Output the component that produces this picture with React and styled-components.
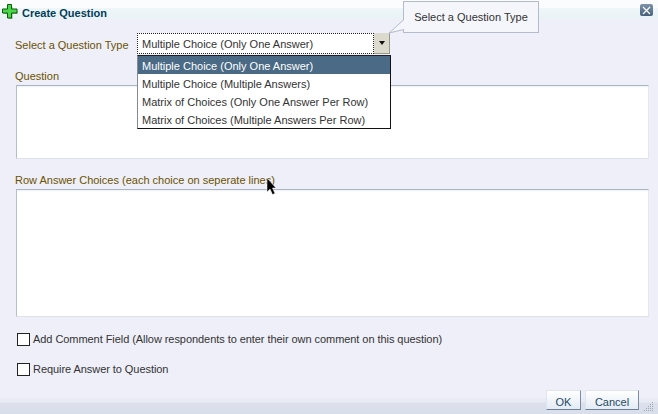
import React from "react";
import styled, { createGlobalStyle } from "styled-components";

const Global = createGlobalStyle`
  html, body { margin: 0; padding: 0; background: #eeeff8; }
  body { font-family: "Liberation Sans", Arial, sans-serif; font-size: 11px; overflow: hidden; }
`;
const Dialog = styled.div`
  position: relative; width: 658px; height: 414px; overflow: hidden;
  display: flex; flex-direction: column; background: #eeeff8;
`;
const TopGap = styled.div`height: 8px; background: #fbfcfd; flex: none;`;
const Header = styled.div`
  height: 11px; flex: none; display: flex; align-items: center; gap: 4px; padding-left: 2px;
  background: linear-gradient(#eef6f9, #e9f2f5);
`;
const Title = styled.span`font-weight: bold; font-size: 11px; color: #003d5b; line-height: 11px;`;
const PlusIcon = styled.svg`width: 16px; height: 16px; flex: none; margin-top: -4px; overflow: visible;`;
const CloseBtn = styled.div`
  position: absolute; left: 640px; top: 4px; width: 13px; height: 12px; border-radius: 2px;
  background: linear-gradient(#7f94ab, #46607c); display: flex; align-items: center; justify-content: center;
`;
const Body = styled.div`flex: 1; display: flex; flex-direction: column; padding: 14px 9px 0 15px; min-height: 0;`;
const TypeRow = styled.div`display: flex; align-items: center; height: 21px; gap: 7px; margin-bottom: 1px;`;
const Label = styled.label`color: #6b5200; font-size: 11px; line-height: 13px; display: block;`;
const TypeLabel = styled(Label)`width: 115px; flex: none; white-space: nowrap; padding-top: 3px;`;
const Select = styled.div`
  position: relative; width: 237px; height: 21px; box-sizing: border-box; background: #fff; display: flex;
  align-items: center; padding: 1px 0 0 4px; color: #333; border: 1px dotted #222;
`;
const Arrow = styled.div`
  position: absolute; left: 236px; top: -1px; width: 16px; height: 21px; background: #dbdacd;
  border-right: 1px solid #98988c; border-bottom: 1px solid #98988c; box-sizing: border-box;
  display: flex; align-items: center; justify-content: center;
  &::after { content: ""; border: 3px solid transparent; border-top: 4px solid #111; border-bottom: 0; }
`;
const Dropdown = styled.div`
  position: absolute; left: 137px; top: 55px; width: 254px; height: 74px; box-sizing: border-box;
  background: #fff; border: 1px solid #111; border-top-color: #222; border-left-color: #889; z-index: 2;
`;
const Option = styled.div`
  height: 18px; line-height: 20px; padding-left: 4px; font-size: 11px;
  color: ${p => (p.$active ? "#fff" : "#333")};
  background: ${p => (p.$active ? "#4a6a85" : "transparent")};
`;
const QLabel = styled(Label)`margin-top: 15px;`;
const RowLabel = styled(Label)`margin-top: 15px;`;
const TextBox = styled.div`
  margin: 2px 0 0 1px; height: ${p => p.$h}px; box-sizing: border-box; background: #fff;
  border-top: 1px solid #a9b5c0; border-left: 1px solid #b5bfc9;
  border-right: 1px solid #e3e6ee; border-bottom: 1px solid #dfe2ea;
  box-shadow: inset 0 2px 2px -1px #eef1f4;
`;
const CheckRow = styled.div`
  display: flex; align-items: center; gap: 3px; height: 14px; margin: ${p => p.$mt}px 0 0 2px;
  color: #333; letter-spacing: -0.06px;
`;
const Box = styled.span`width: 13px; height: 13px; box-sizing: border-box; border: 1px solid #222; background: #fff; flex: none;`;
const Footer = styled.div`
  height: 16px; flex: none; background: linear-gradient(#e8ebf4 0, #e8ebf4 4px, #dbe0ec 5px, #d8deea 100%); position: relative;
`;
const Buttons = styled.div`position: absolute; right: 19px; bottom: 4px; display: flex; gap: 4px;`;
const Button = styled.div`
  height: 20px; width: ${p => p.$w}px; box-sizing: border-box; display: flex; align-items: center; justify-content: center;
  padding-top: 3px;
  background: linear-gradient(#fff, #e3ebf5); color: #1d4a66; font-size: 11px;
  border: 1px solid #dfe4ee; border-right-color: #7d8ea0; border-bottom-color: #6d7f92;
`;
const Grip = styled.svg`position: absolute; right: 4px; bottom: 2px; width: 11px; height: 11px;`;
const Tip = styled.div`
  position: absolute; left: 403px; top: 1px; width: 136px; height: 32px; box-sizing: border-box;
  background: #f5f6fc; border: 1px solid #b3bcca; display: flex; align-items: center; justify-content: center;
  color: #333; z-index: 3;
`;
const TipTail = styled.svg`position: absolute; left: 388px; top: 17px; width: 17px; height: 17px; z-index: 4;`;
const Cursor = styled.svg`position: absolute; left: 266px; top: 178px; width: 11px; height: 17px; z-index: 5;`;

const options = [
  "Multiple Choice (Only One Answer)",
  "Multiple Choice (Multiple Answers)",
  "Matrix of Choices (Only One Answer Per Row)",
  "Matrix of Choices (Multiple Answers Per Row)",
];

export default function App() {
  return (
    <>
      <Global />
      <Dialog>
        <TopGap />
        <Header>
          <PlusIcon viewBox="0 0 16 16">
            <path d="M6 2h4v4h5v3h-5v5H6V9H1V6h5z" fill="#0a3a0a" opacity="0.35" transform="translate(0.6 1)" />
            <path d="M5.5 0.5h4v4.5h5.5v4H9.5v5h-4V9H0.5V5h5z" fill="#46d846" stroke="#0c5a0c" strokeWidth="1" strokeLinejoin="round" />
          </PlusIcon>
          <Title>Create Question</Title>
        </Header>
        <CloseBtn>
          <svg width="9" height="9" viewBox="0 0 9 9"><path d="M1 1l7 7M8 1L1 8" stroke="#fff" strokeWidth="1.2" /></svg>
        </CloseBtn>
        <Body>
          <TypeRow>
            <TypeLabel>Select a Question Type</TypeLabel>
            <Select>{options[0]}<Arrow /></Select>
          </TypeRow>
          <QLabel>Question</QLabel>
          <TextBox $h={74} />
          <RowLabel>Row Answer Choices (each choice on seperate lines)</RowLabel>
          <TextBox $h={128} />
          <CheckRow $mt={15}><Box />Add Comment Field (Allow respondents to enter their own comment on this question)</CheckRow>
          <CheckRow $mt={16}><Box />Require Answer to Question</CheckRow>
        </Body>
        <Footer>
          <Buttons>
            <Button $w={35}>OK</Button>
            <Button $w={54}>Cancel</Button>
          </Buttons>
          <Grip viewBox="0 0 11 11" fill="#a0a8b4">
            <rect x="9" y="1" width="1" height="1" /><rect x="7" y="3" width="1" height="1" /><rect x="9" y="3" width="1" height="1" />
            <rect x="5" y="5" width="1" height="1" /><rect x="7" y="5" width="1" height="1" /><rect x="9" y="5" width="1" height="1" />
            <rect x="3" y="7" width="1" height="1" /><rect x="5" y="7" width="1" height="1" /><rect x="7" y="7" width="1" height="1" /><rect x="9" y="7" width="1" height="1" />
            <rect x="1" y="9" width="1" height="1" /><rect x="3" y="9" width="1" height="1" /><rect x="5" y="9" width="1" height="1" /><rect x="7" y="9" width="1" height="1" /><rect x="9" y="9" width="1" height="1" />
          </Grip>
        </Footer>
        <Dropdown>
          {options.map((o, i) => <Option key={o} $active={i === 0}>{o}</Option>)}
        </Dropdown>
        <Tip>Select a Question Type</Tip>
        <TipTail viewBox="0 0 17 17">
          <path d="M16 12.5 L1 16 L16 2.5" fill="#f5f6fc" stroke="#b3bcca" />
        </TipTail>
        <Cursor viewBox="0 0 11 17">
          <path d="M1 0v14l3-3 2.5 5.5 2.5-1L6.5 10H10z" fill="#000" stroke="#fff" strokeWidth="0.5" />
        </Cursor>
      </Dialog>
    </>
  );
}
